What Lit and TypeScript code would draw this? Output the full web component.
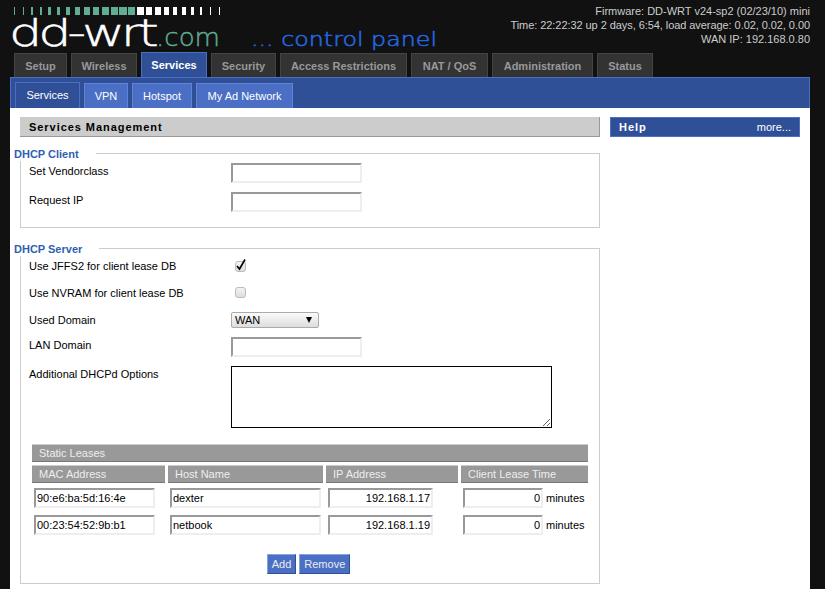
import { LitElement, html, css, svg } from 'lit';
import { customElement } from 'lit/decorators.js';

const MAIN_TABS = [
  { label: 'Setup', w: 53 },
  { label: 'Wireless', w: 66 },
  { label: 'Services', w: 66 },
  { label: 'Security', w: 65 },
  { label: 'Access Restrictions', w: 127 },
  { label: 'NAT / QoS', w: 77 },
  { label: 'Administration', w: 101 },
  { label: 'Status', w: 56 },
];
const SUB_TABS = [
  { label: 'Services', w: 65 },
  { label: 'VPN', w: 44 },
  { label: 'Hotspot', w: 60 },
  { label: 'My Ad Network', w: 97 },
];
const LEASES = [
  { mac: '90:e6:ba:5d:16:4e', host: 'dexter', ip: '192.168.1.17' },
  { mac: '00:23:54:52:9b:b1', host: 'netbook', ip: '192.168.1.19' },
];

// logo strip: [x, width] pairs, green up to the middle and white after it
const BARS: [number, number][] = [
  [14, 1], [23, 1], [31, 2], [40, 2], [48, 3], [57, 3], [66, 4], [75, 5], [84, 6], [93, 6],
  [102, 7], [111, 7], [119, 8], [128, 7], [137, 7], [146, 6], [155, 6], [164, 5], [173, 4],
  [182, 4], [191, 3], [200, 2], [210, 1], [219, 1],
];

@customElement('app-root')
export class AppRoot extends LitElement {
  static styles = css`
    :host {
      display: block;
      height: 100vh;
      overflow: hidden;
      background: #111;
      font-family: 'Liberation Sans', Arial, sans-serif;
      font-size: 11px;
      color: #000;
    }
    .header {
      position: relative;
      height: 52px;
    }
    .logo {
      display: block;
      overflow: visible;
    }
    .logo text {
      font-family: 'DejaVu Sans', sans-serif;
      font-weight: 200;
    }
    .info {
      position: absolute;
      top: 4px;
      right: 15px;
      text-align: right;
      color: #ccc;
      font-size: 11px;
      line-height: 14px;
    }
    .info .time {
      letter-spacing: -0.065px;
    }
    .tabs {
      display: flex;
      gap: 4px;
      align-items: flex-end;
      height: 25px;
      padding-left: 14px;
    }
    .tab {
      box-sizing: border-box;
      height: 24px;
      line-height: 24px;
      text-align: center;
      white-space: nowrap;
      font-weight: bold;
      color: #999;
      background: #333;
      border: 1px solid #444;
      border-bottom: 0;
    }
    .tab.active {
      height: 25px;
      color: #fff;
      background: #2f5097;
      border-color: #4a6fc4;
    }
    .panel {
      margin: 0 15px 0 10px;
    }
    .subtabs {
      display: flex;
      gap: 4px;
      align-items: flex-end;
      box-sizing: border-box;
      height: 31px;
      padding-left: 4px;
      background: #2f5097;
      border: 1px solid #4a6fc4;
      border-bottom: 0;
    }
    .subtab {
      box-sizing: border-box;
      height: 25px;
      line-height: 24px;
      text-align: center;
      white-space: nowrap;
      color: #fff;
      background: #4a6fc4;
      border: 1px solid #5f83d8;
      border-bottom: 0;
    }
    .subtab.active {
      height: 26px;
      background: #2f5097;
      border-color: #4a6fc4;
    }
    .content {
      display: flex;
      gap: 10px;
      background: #fff;
      padding: 9px 10px 40px 10px;
      min-height: 480px;
    }
    .main {
      width: 580px;
    }
    .side {
      width: 190px;
    }
    h2 {
      box-sizing: border-box;
      margin: 0;
      height: 20px;
      padding-left: 9px;
      line-height: 20px;
      font-size: 11px;
      letter-spacing: 0.95px;
      font-weight: bold;
      background: #ccc;
      border-right: 1px solid #999;
      border-bottom: 1px solid #999;
    }
    .help {
      box-sizing: border-box;
      display: flex;
      justify-content: space-between;
      height: 20px;
      padding: 0 8px;
      line-height: 18px;
      color: #fff;
      background: #2f5097;
      border: 1px solid #4a6fc4;
    }
    .help b {
      letter-spacing: 1px;
    }
    fieldset {
      box-sizing: border-box;
      margin: 8px 0 0;
      padding: 2px 0 0;
      min-width: 0;
      border: 1px solid #ccc;
    }
    fieldset + fieldset {
      margin-top: 12px;
    }
    legend {
      margin-left: -7px;
      padding: 0 17px 0 0;
      height: 16px;
      line-height: 19px;
      font-weight: bold;
      color: #2f5fb0;
      background: #fff;
    }
    .row {
      display: grid;
      grid-template-columns: 202px 1fr;
      padding-left: 8px;
    }
    .row label {
      padding-top: 2px;
      line-height: 13px;
    }
    input[type='text'],
    textarea {
      box-sizing: border-box;
      margin: 0;
      padding: 0 1px;
      font: 11px 'Liberation Sans', Arial, sans-serif;
      border: 2px solid;
      border-color: #999 #eee #eee #999;
      background: #fff;
      color: #000;
      outline: none;
    }
    input[type='text'] {
      height: 20px;
      width: 131px;
    }
    textarea {
      display: block;
      width: 321px;
      height: 62px;
      border: 1px solid #000;
      resize: both;
    }
    .check {
      box-sizing: border-box;
      width: 11px;
      height: 11px;
      margin: 3px 0 0 4px;
      border: 1px solid #bbb;
      border-radius: 3px;
      background: linear-gradient(#f4f4f4, #ddd);
      position: relative;
    }
    .check.off {
      margin-top: 2px;
    }
    .check svg {
      position: absolute;
      left: 0;
      top: -3px;
      overflow: visible;
    }
    .select {
      box-sizing: border-box;
      display: flex;
      justify-content: space-between;
      align-items: center;
      width: 88px;
      height: 16px;
      padding: 0 6px 0 3px;
      font-size: 11px;
      border: 1px solid #aaa;
      border-radius: 2px;
      background: linear-gradient(#fafafa, #ddd);
    }
    .arrow {
      width: 0;
      height: 0;
      border-left: 3px solid transparent;
      border-right: 3px solid transparent;
      border-top: 6px solid #000;
    }
    .leases {
      display: grid;
      grid-template-columns: 133px 155px 132px 127px;
      column-gap: 3px;
      margin: 16px 0 0 11px;
      width: 556px;
    }
    .th {
      box-sizing: border-box;
      height: 18px;
      padding-left: 7px;
      line-height: 17px;
      color: #eee;
      background: #999;
      border-top: 1px solid #ccc;
      border-bottom: 1px solid #777;
    }
    .th.title {
      grid-column: 1 / -1;
      margin-bottom: 3px;
    }
    .cell {
      display: flex;
      align-items: center;
      gap: 3px;
      height: 20px;
      margin-top: 5px;
      padding-left: 2px;
    }
    .cell.next {
      margin-top: 7px;
    }
    input[type='text'].mac {
      width: 121px;
    }
    input[type='text'].host {
      width: 151px;
    }
    input[type='text'].ip {
      width: 105px;
      text-align: right;
    }
    input[type='text'].time {
      width: 80px;
      text-align: right;
    }
    .buttons {
      display: flex;
      justify-content: center;
      gap: 3px;
      margin: 19px 0 9px;
      padding-right: 3px;
    }
    .btn {
      box-sizing: border-box;
      height: 20px;
      padding: 0 4px;
      line-height: 18px;
      color: #eee;
      background: #4a6fc4;
      border: 1px solid #87a3e0;
      border-right-color: #2f5097;
      border-bottom-color: #2f5097;
    }
  `;

  private logo() {
    return html`<svg class="logo" width="450" height="52" viewBox="0 0 450 52">
      ${BARS.map(([x, w]) => svg`<rect x=${x} y="7" width=${w} height="8" fill=${x < 136 ? '#5fae94' : '#fff'}></rect>`)}
      <text transform="translate(9 46) scale(1.38 1)" font-size="38" letter-spacing="-3" fill="#fff" stroke="#fff" stroke-width="0.5">dd-wrt</text>
      <text x="156" y="46" font-size="24" fill="#5fae94" stroke="#5fae94" stroke-width="0.4" textLength="64" lengthAdjust="spacingAndGlyphs">.com</text>
      <text x="251" y="46" font-size="19" fill="#2468e4" stroke="#2468e4" stroke-width="0.5" textLength="186" lengthAdjust="spacingAndGlyphs">... control panel</text>
    </svg>`;
  }

  private row(label: string, control: unknown, height: number) {
    return html`<div class="row" style="height:${height}px"><label>${label}</label>${control}</div>`;
  }

  render() {
    return html`
      <div class="header">
        ${this.logo()}
        <div class="info">
          <div>Firmware: DD-WRT v24-sp2 (02/23/10) mini</div>
          <div class="time">Time: 22:22:32 up 2 days, 6:54, load average: 0.02, 0.02, 0.00</div>
          <div>WAN IP: 192.168.0.80</div>
        </div>
      </div>
      <div class="tabs">
        ${MAIN_TABS.map((t) => html`<div class="tab ${t.label === 'Services' ? 'active' : ''}" style="width:${t.w}px">${t.label}</div>`)}
      </div>
      <div class="panel">
        <div class="subtabs">
          ${SUB_TABS.map((t) => html`<div class="subtab ${t.label === 'Services' ? 'active' : ''}" style="width:${t.w}px">${t.label}</div>`)}
        </div>
        <div class="content">
          <div class="main">
            <h2>Services Management</h2>
            <fieldset>
              <legend>DHCP Client</legend>
              ${this.row('Set Vendorclass', html`<input type="text" />`, 29)}
              ${this.row('Request IP', html`<input type="text" />`, 35)}
            </fieldset>
            <fieldset>
              <legend>DHCP Server</legend>
              ${this.row('Use JFFS2 for client lease DB', html`<div class="check">
                <svg width="11" height="14" viewBox="0 0 11 14"><path d="M1 7l2.5 3L9 .5" fill="none" stroke="#000" stroke-width="1.6"></path></svg>
              </div>`, 27)}
              ${this.row('Use NVRAM for client lease DB', html`<div class="check off"></div>`, 27)}
              ${this.row('Used Domain', html`<div class="select"><span>WAN</span><span class="arrow"></span></div>`, 25)}
              ${this.row('LAN Domain', html`<input type="text" />`, 29)}
              ${this.row('Additional DHCPd Options', html`<textarea></textarea>`, 62)}
              <div class="leases">
                <div class="th title">Static Leases</div>
                <div class="th">MAC Address</div>
                <div class="th">Host Name</div>
                <div class="th">IP Address</div>
                <div class="th">Client Lease Time</div>
                ${LEASES.map((l, i) => html`
                  <div class="cell ${i ? 'next' : ''}"><input type="text" class="mac" .value=${l.mac} /></div>
                  <div class="cell ${i ? 'next' : ''}"><input type="text" class="host" .value=${l.host} /></div>
                  <div class="cell ${i ? 'next' : ''}"><input type="text" class="ip" .value=${l.ip} /></div>
                  <div class="cell ${i ? 'next' : ''}"><input type="text" class="time" value="0" /><span>minutes</span></div>
                `)}
              </div>
              <div class="buttons">
                <div class="btn">Add</div>
                <div class="btn">Remove</div>
              </div>
            </fieldset>
          </div>
          <div class="side">
            <div class="help"><b>Help</b><span>more...</span></div>
          </div>
        </div>
      </div>
    `;
  }
}
